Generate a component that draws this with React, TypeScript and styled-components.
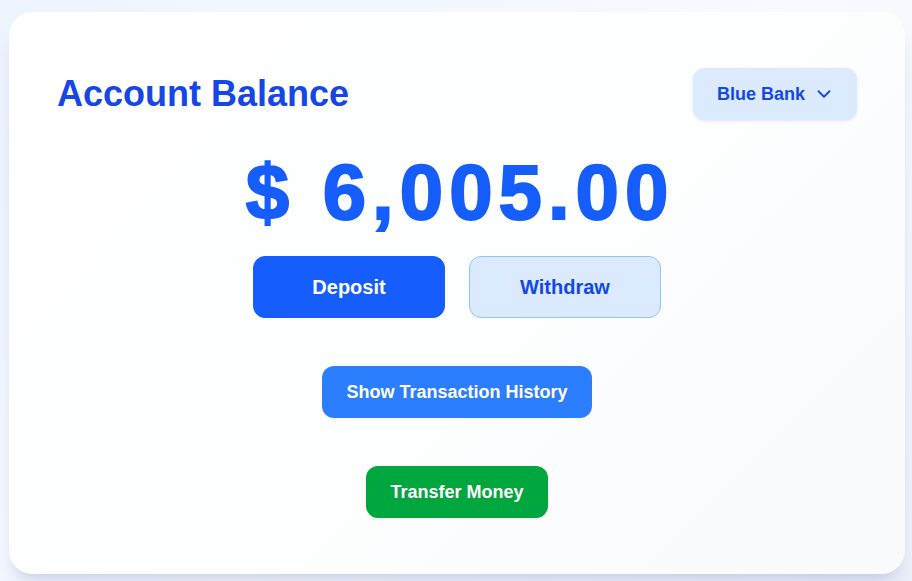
import React from "react";
import styled, { createGlobalStyle } from "styled-components";
import { ChevronDown } from "lucide-react";

const GlobalStyle = createGlobalStyle`
  html, body { margin: 0; padding: 0; }
  body {
    font-family: "Liberation Sans", Arial, sans-serif;
    background: linear-gradient(135deg, #eef4ff 0%, #f8faff 55%, #eef2fb 100%);
    min-height: 581px;
  }
  * { box-sizing: border-box; }
`;

const Page = styled.div`
  padding: 12px 7px 7px 9px;
`;

const Card = styled.div`
  width: 896px;
  height: 562px;
  border-radius: 24px;
  background: linear-gradient(135deg, #ffffff 0%, #fdfefe 50%, #f9fafc 100%);
  box-shadow: 0 20px 25px -5px rgba(30, 58, 138, 0.12), 0 8px 10px -6px rgba(30, 58, 138, 0.1);
  padding: 56px 48px 56px;
  display: flex;
  flex-direction: column;
  align-items: center;
`;

const Header = styled.div`
  width: 100%;
  height: 52px;
  display: flex;
  align-items: center;
  justify-content: space-between;
`;

const Title = styled.h1`
  margin: 0;
  font-size: 36px;
  line-height: 40px;
  font-weight: 700;
  color: #1447e6;
`;

const BankButton = styled.button`
  height: 52px;
  padding: 0 22px 0 24px;
  display: flex;
  align-items: center;
  gap: 8px;
  border: none;
  border-radius: 12px;
  background: #dbeafe;
  color: #1447e6;
  font-family: inherit;
  font-size: 18px;
  font-weight: 700;
  box-shadow: 0 1px 3px rgba(30, 58, 138, 0.12);
`;

const Amount = styled.div`
  margin-top: 33px;
  font-size: 78px;
  line-height: 78px;
  font-weight: 700;
  letter-spacing: 6px;
  margin-right: -6px;
  color: #155dfc;
  -webkit-text-stroke: 2px #155dfc;
`;

const ActionRow = styled.div`
  margin-top: 25px;
  display: flex;
  gap: 24px;
`;

const ActionButton = styled.button<{ $variant: "solid" | "soft" }>`
  width: 192px;
  height: 62px;
  border-radius: 12px;
  font-family: inherit;
  font-size: 20px;
  font-weight: 700;
  border: 1px solid ${(p) => (p.$variant === "solid" ? "#155dfc" : "#8ec5ff")};
  background: ${(p) => (p.$variant === "solid" ? "#155dfc" : "#dbeafe")};
  color: ${(p) => (p.$variant === "solid" ? "#ffffff" : "#1447e6")};
`;

const PillButton = styled.button<{ $color: string }>`
  margin-top: 48px;
  height: 52px;
  padding: 0 24px;
  border: none;
  border-radius: 12px;
  background: ${(p) => p.$color};
  color: #ffffff;
  font-family: inherit;
  font-size: 18px;
  font-weight: 700;
`;

export default function App() {
  return (
    <>
      <GlobalStyle />
      <Page>
        <Card>
          <Header>
            <Title>Account Balance</Title>
            <BankButton>
              Blue Bank
              <ChevronDown size={22} strokeWidth={2} />
            </BankButton>
          </Header>
          <Amount>$ 6,005.00</Amount>
          <ActionRow>
            <ActionButton $variant="solid">Deposit</ActionButton>
            <ActionButton $variant="soft">Withdraw</ActionButton>
          </ActionRow>
          <PillButton $color="#2b7fff">Show Transaction History</PillButton>
          <PillButton $color="#00a63e">Transfer Money</PillButton>
        </Card>
      </Page>
    </>
  );
}
